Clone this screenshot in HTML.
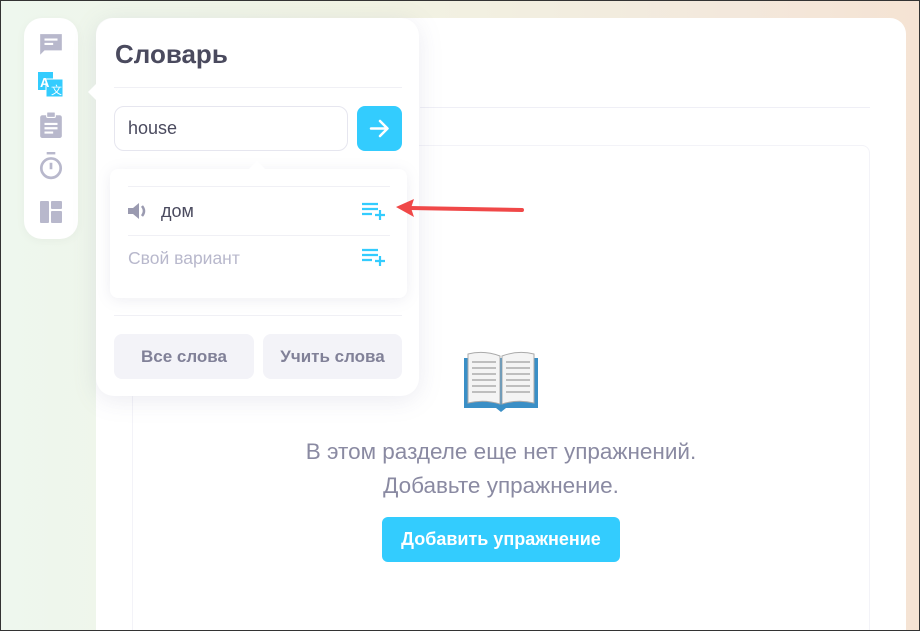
<!DOCTYPE html>
<html><head><meta charset="utf-8"><style>
*{box-sizing:border-box;margin:0;padding:0}
html{width:920px;height:631px;overflow:hidden}
body{width:920px;height:631px;overflow:hidden;font-family:"Liberation Sans","DejaVu Sans",sans-serif;position:relative;
background:linear-gradient(90deg,#eef7ee 0%,#f1f3e3 40%,#f3e8dc 80%,#f5e3d3 100%);}
.frame{position:absolute;left:0;top:0;width:920px;height:631px;border:1px solid #333;z-index:50;pointer-events:none}
.main{position:absolute;left:96px;top:18px;width:810px;height:613px;background:#fff;border-radius:16px 16px 0 0}
.hline{position:absolute;left:420px;top:107px;width:450px;height:1px;background:#efeff6}
.inner{position:absolute;left:132px;top:145px;width:738px;height:486px;border:1px solid #f3f3f8;border-bottom:0;border-radius:8px 8px 0 0}
.side{position:absolute;left:24px;top:18px;width:54px;height:221px;background:#fff;border-radius:18px;box-shadow:0 2px 10px rgba(0,0,0,.04)}
.pop{position:absolute;left:96px;top:18px;width:323px;height:378px;background:#fff;border-radius:18px;box-shadow:0 4px 24px rgba(120,120,160,.15)}
.pop:before{content:"";position:absolute;left:-8px;top:66px;border:8px solid transparent;border-left:0;border-right-color:#fff}
h1{position:absolute;left:19px;top:21px;font-size:26px;font-weight:bold;color:#4a4a5e}
.l1{position:absolute;left:18px;top:69px;width:288px;height:1px;background:#f0f0f5}
.inp{position:absolute;left:18px;top:88px;width:234px;height:45px;border:1px solid #e6e6ef;border-radius:10px;font-size:18px;color:#4a4a5e;padding:11px 13px}
.go{position:absolute;left:261px;top:88px;width:45px;height:45px;background:#33ccfe;border-radius:8px}
.res{position:absolute;left:14px;top:151px;width:297px;height:129px;background:#fff;border-radius:8px;box-shadow:0 2px 14px rgba(120,120,160,.13)}
.res:before{content:"";position:absolute;left:139px;top:-8px;border:8px solid transparent;border-top:0;border-bottom-color:#fff}
.rl{position:absolute;left:18px;width:262px;height:1px;background:#f0f0f5}
.w{position:absolute;left:18px;font-size:18px}
.add{position:absolute;left:252px}
.l2{position:absolute;left:18px;top:297px;width:288px;height:1px;background:#f0f0f5}
.btn{position:absolute;top:316px;height:45px;background:#f3f3f8;border-radius:8px;font-size:17px;font-weight:bold;color:#818198;text-align:center;line-height:45px}
.msg{position:absolute;left:96px;width:810px;text-align:center;font-size:22.5px;color:#8a8aa2}
.cta{position:absolute;left:382px;top:517px;width:238px;height:45px;background:#33ccfe;border-radius:6px;color:#fff;font-size:18px;font-weight:bold;text-align:center;line-height:45px}
</style></head><body>
<div class="main"></div>
<div class="hline"></div>
<div class="inner"></div>
<svg style="position:absolute;left:462px;top:350px" width="78" height="62" viewBox="0 0 78 62">
<path d="M2 8h74v50H44l-5 4-5-4H2z" fill="#3a8fc6"/>
<path d="M6 4q16-4 32 2v48q-16-5-32-1z" fill="#f4f4f4" stroke="#aaa"/>
<path d="M72 4q-16-4-32 2v48q16-5 32-1z" fill="#f4f4f4" stroke="#aaa"/>
<g stroke="#888" stroke-width="1"><path d="M10 12h24M10 18h24M10 24h24M10 30h24M10 36h24M10 42h24M44 12h24M44 18h24M44 24h24M44 30h24M44 36h24M44 42h24"/></g>
</svg>
<div class="msg" style="top:439px">В этом разделе еще нет упражнений.</div>
<div class="msg" style="top:473px">Добавьте упражнение.</div>
<div class="cta">Добавить упражнение</div>

<div class="side">
<svg style="position:absolute;left:14px;top:14px" width="26" height="26" viewBox="0 0 24 24"><path d="M2 2h20v15H6l-4 4z" fill="#b8b8cc"/><path d="M6 7h12M6 11h8" stroke="#fff" stroke-width="2"/></svg>
<svg style="position:absolute;left:14px;top:54px" width="26" height="26" viewBox="0 0 26 26"><rect x="0" y="0" width="15" height="18" fill="#33ccfe"/><rect x="8" y="7" width="17" height="18" fill="#33ccfe" stroke="#fff" stroke-width="1"/><text x="2" y="15" font-size="13" font-weight="bold" fill="#fff" font-family="Liberation Sans">A</text><text x="13" y="22" font-size="11" fill="#fff" font-family="Liberation Sans">文</text></svg>
<svg style="position:absolute;left:15px;top:94px" width="24" height="26" viewBox="0 0 22 24"><rect x="1" y="3" width="20" height="21" rx="2" fill="#b8b8cc"/><rect x="7" y="0" width="8" height="5" rx="1" fill="#b8b8cc" stroke="#fff"/><path d="M5 11h12M5 15h12M5 19h8" stroke="#fff" stroke-width="2"/></svg>
<svg style="position:absolute;left:14px;top:134px" width="26" height="28" viewBox="0 0 24 26"><path d="M8 1h8" stroke="#b8b8cc" stroke-width="2.5"/><circle cx="12" cy="15" r="9" fill="none" stroke="#b8b8cc" stroke-width="2.5"/><path d="M12 10v6" stroke="#b8b8cc" stroke-width="2.5"/></svg>
<svg style="position:absolute;left:16px;top:183px" width="22" height="22" viewBox="0 0 22 22"><rect x="0" y="0" width="9" height="22" rx="1" fill="#b8b8cc"/><rect x="11" y="0" width="11" height="8" rx="1" fill="#b8b8cc"/><rect x="11" y="10" width="11" height="12" rx="1" fill="#b8b8cc"/></svg>
</div>

<div class="pop">
<h1>Словарь</h1>
<div class="l1"></div>
<div class="inp">house</div>
<div class="go"><svg width="45" height="45" viewBox="0 0 45 45"><path d="M14 22.5h16M23 15l7.5 7.5L23 30" stroke="#fff" stroke-width="2.5" fill="none" stroke-linecap="round" stroke-linejoin="round"/></svg></div>
<div class="res">
<div class="rl" style="top:17px"></div>
<svg style="position:absolute;left:17px;top:32px" width="22" height="20" viewBox="0 0 22 20"><path d="M1 7h5l6-5v16l-6-5H1z" fill="#9a9ab0"/><path d="M15 5q4 5 0 10" stroke="#9a9ab0" stroke-width="2.5" fill="none"/></svg>
<div class="w" style="left:51px;top:32px;color:#4a4a5e">дом</div>
<svg class="add" style="top:33px" width="26" height="18" viewBox="0 0 26 18"><path d="M0 2h16M0 7h16M0 12h10M18 8v10M13 13h10" stroke="#33ccfe" stroke-width="2.2"/></svg>
<div class="rl" style="top:66px"></div>
<div class="w" style="top:79px;color:#b8b8cc;font-size:17.5px">Свой вариант</div>
<svg class="add" style="top:79px" width="26" height="18" viewBox="0 0 26 18"><path d="M0 2h16M0 7h16M0 12h10M18 8v10M13 13h10" stroke="#33ccfe" stroke-width="2.2"/></svg>
</div>
<div class="l2"></div>
<div class="btn" style="left:18px;width:140px">Все слова</div>
<div class="btn" style="left:167px;width:139px">Учить слова</div>
</div>

<svg style="position:absolute;left:394px;top:196px" width="134" height="24" viewBox="0 0 134 24"><path d="M16 12L128 14" stroke="#f04848" stroke-width="4" stroke-linecap="round"/><path d="M2 11L20 3 17 12 20 21z" fill="#f04848"/></svg>
<div class="frame"></div>
</body></html>
